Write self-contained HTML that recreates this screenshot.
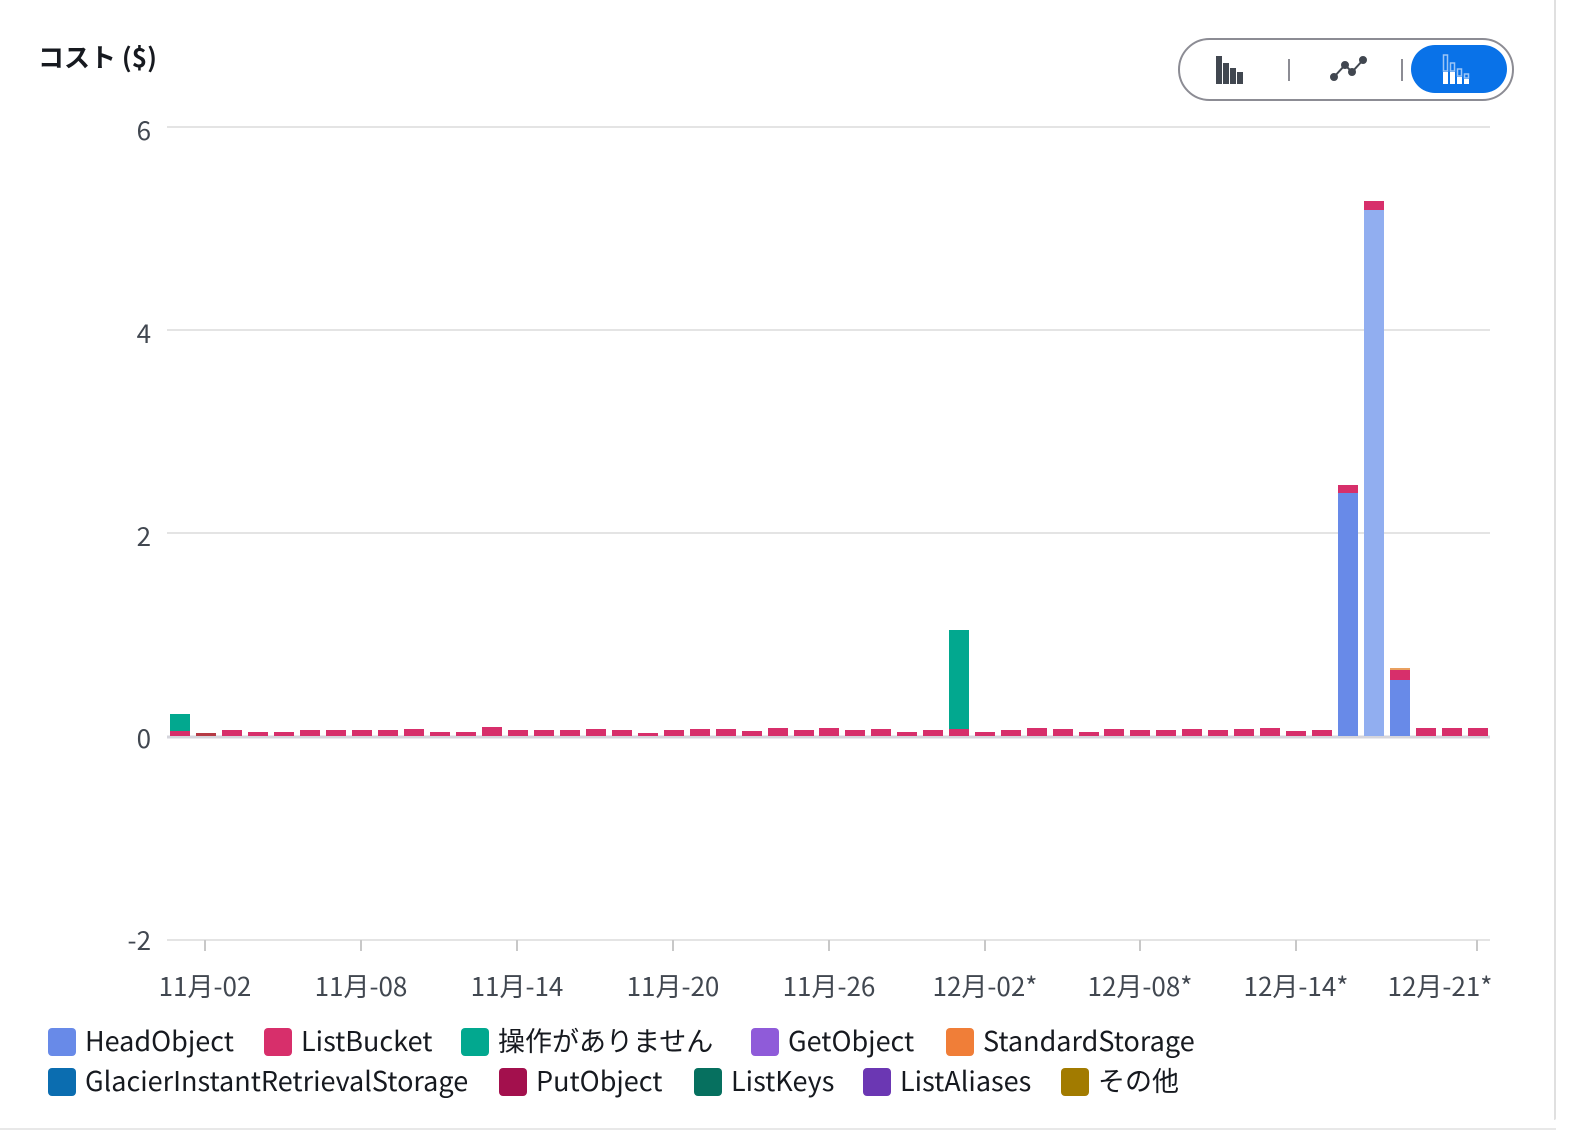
<!DOCTYPE html>
<html><head><meta charset="utf-8"><style>
body{margin:0;width:1580px;height:1140px;background:#fff;overflow:hidden;position:relative;font-family:"Noto Sans CJK JP","Liberation Sans",sans-serif;color:#16191f}
.t{position:absolute;left:38px;top:38px;font-size:26px;font-weight:bold;}
.lg{position:absolute;font-size:27px;line-height:32px;white-space:nowrap}
.lg i{display:inline-block;width:28px;height:28px;border-radius:4px;vertical-align:-5px;margin-right:9px}
svg text{font-family:"Noto Sans CJK JP","Liberation Sans",sans-serif;}
</style></head><body>
<div class="t">コスト ($)</div>
<div style="position:absolute;left:1554px;top:0;width:2px;height:1120px;background:#e0e0e0;border-radius:0 0 14px 0"></div>
<div style="position:absolute;left:0;top:1128px;width:1556px;height:2px;background:#e8e8e8"></div>
<div style="position:absolute;left:1178px;top:38px;width:332px;height:59px;border:2px solid #8c8c94;border-radius:32px"></div>
<div style="position:absolute;left:1411px;top:45px;width:96px;height:48px;background:#0972e8;border-radius:24px"></div>
<svg width="1580" height="1140" style="position:absolute;left:0;top:0">
<g fill="#414750"><rect x="1216" y="56" width="6" height="28"/><rect x="1223" y="63" width="6" height="21"/><rect x="1230" y="68" width="6" height="16"/><rect x="1237" y="72" width="6" height="12"/></g>
<rect x="1288" y="59" width="2" height="22" fill="#8c8c94"/><rect x="1401" y="59" width="2" height="22" fill="#8c8c94"/>
<g stroke="#414750" stroke-width="2" fill="#414750"><polyline points="1334,77 1345,65 1352,72 1363,60" fill="none"/><circle cx="1334" cy="77" r="3"/><circle cx="1345" cy="65" r="3"/><circle cx="1352" cy="72" r="3"/><circle cx="1363" cy="60" r="3"/></g>
<g fill="#fff"><rect x="1443" y="72" width="5" height="12"/><rect x="1450" y="72" width="5" height="12"/><rect x="1457" y="77" width="5" height="7"/><rect x="1464" y="79" width="5" height="5"/></g>
<g fill="none" stroke="#9cc5f5" stroke-width="1.5"><rect x="1443.5" y="55" width="4" height="16"/><rect x="1450.5" y="63" width="4" height="8"/><rect x="1457.5" y="69" width="4" height="7"/><rect x="1464.5" y="74" width="4" height="4"/></g>
<g stroke="#dcdcdc" stroke-width="1.5"><line x1="167" y1="127" x2="1490" y2="127"/><line x1="167" y1="330" x2="1490" y2="330"/><line x1="167" y1="533" x2="1490" y2="533"/><line x1="167" y1="940" x2="1490" y2="940"/></g>
<line x1="167" y1="737" x2="1490" y2="737" stroke="#d5d5dc" stroke-width="3"/>
<g fill="#414750" font-size="26" text-anchor="end"><text x="151" y="140">6</text><text x="151" y="343">4</text><text x="151" y="546">2</text><text x="151" y="748">0</text><text x="151" y="950">-2</text></g>
<g stroke="#c8c8c8" stroke-width="2"><line x1="205" y1="940" x2="205" y2="951"/><line x1="361" y1="940" x2="361" y2="951"/><line x1="517" y1="940" x2="517" y2="951"/><line x1="673" y1="940" x2="673" y2="951"/><line x1="829" y1="940" x2="829" y2="951"/><line x1="985" y1="940" x2="985" y2="951"/><line x1="1140" y1="940" x2="1140" y2="951"/><line x1="1296" y1="940" x2="1296" y2="951"/><line x1="1477" y1="940" x2="1477" y2="951"/></g>
<g fill="#414750" font-size="26" text-anchor="middle"><text x="205" y="996">11月-02</text><text x="361" y="996">11月-08</text><text x="517" y="996">11月-14</text><text x="673" y="996">11月-20</text><text x="829" y="996">11月-26</text><text x="985" y="996">12月-02*</text><text x="1140" y="996">12月-08*</text><text x="1296" y="996">12月-14*</text><text x="1440" y="996">12月-21*</text></g>
<g fill="#d72f6b">
<rect x="170" y="731" width="20" height="5"/><rect x="196" y="733" width="20" height="3" fill="#b53a45"/><rect x="222" y="730" width="20" height="6"/><rect x="248" y="732" width="20" height="4"/><rect x="274" y="732" width="20" height="4"/><rect x="300" y="730" width="20" height="6"/><rect x="326" y="730" width="20" height="6"/><rect x="352" y="730" width="20" height="6"/><rect x="378" y="730" width="20" height="6"/><rect x="404" y="729" width="20" height="7"/><rect x="430" y="732" width="20" height="4"/><rect x="456" y="732" width="20" height="4"/><rect x="482" y="727" width="20" height="9"/><rect x="508" y="730" width="20" height="6"/><rect x="534" y="730" width="20" height="6"/><rect x="560" y="730" width="20" height="6"/><rect x="586" y="729" width="20" height="7"/><rect x="612" y="730" width="20" height="6"/><rect x="638" y="733" width="20" height="3"/><rect x="664" y="730" width="20" height="6"/><rect x="690" y="729" width="20" height="7"/><rect x="716" y="729" width="20" height="7"/><rect x="742" y="731" width="20" height="5"/><rect x="768" y="728" width="20" height="8"/><rect x="794" y="730" width="20" height="6"/><rect x="819" y="728" width="20" height="8"/><rect x="845" y="730" width="20" height="6"/><rect x="871" y="729" width="20" height="7"/><rect x="897" y="732" width="20" height="4"/><rect x="923" y="730" width="20" height="6"/><rect x="949" y="729" width="20" height="7"/><rect x="975" y="732" width="20" height="4"/><rect x="1001" y="730" width="20" height="6"/><rect x="1027" y="728" width="20" height="8"/><rect x="1053" y="729" width="20" height="7"/><rect x="1079" y="732" width="20" height="4"/><rect x="1104" y="729" width="20" height="7"/><rect x="1130" y="730" width="20" height="6"/><rect x="1156" y="730" width="20" height="6"/><rect x="1182" y="729" width="20" height="7"/><rect x="1208" y="730" width="20" height="6"/><rect x="1234" y="729" width="20" height="7"/><rect x="1260" y="728" width="20" height="8"/><rect x="1286" y="731" width="20" height="5"/><rect x="1312" y="730" width="20" height="6"/>
<rect x="1338" y="485" width="20" height="8"/><rect x="1364" y="201" width="20" height="9"/><rect x="1390" y="670" width="20" height="10"/>
<rect x="1416" y="728" width="20" height="8"/><rect x="1442" y="728" width="20" height="8"/><rect x="1468" y="728" width="20" height="8"/>
</g>
<rect x="170" y="714" width="20" height="17" fill="#02a88f"/><rect x="949" y="630" width="20" height="99" fill="#02a88f"/>
<rect x="1338" y="493" width="20" height="243" fill="#688ae8"/><rect x="1364" y="210" width="20" height="526" fill="#91aef0"/><rect x="1390" y="680" width="20" height="56" fill="#688ae8"/><rect x="1390" y="668" width="20" height="2" fill="#e9a060"/>
</svg>
<div class="lg" style="left:48px;top:1024px"><i style="background:#688ae8"></i>HeadObject</div>
<div class="lg" style="left:264px;top:1024px"><i style="background:#d72f6b"></i>ListBucket</div>
<div class="lg" style="left:461px;top:1024px"><i style="background:#02a88f"></i>操作がありません</div>
<div class="lg" style="left:751px;top:1024px"><i style="background:#8f5bd9"></i>GetObject</div>
<div class="lg" style="left:946px;top:1024px"><i style="background:#f07e38"></i>StandardStorage</div>
<div class="lg" style="left:48px;top:1064px"><i style="background:#0b6db0"></i>GlacierInstantRetrievalStorage</div>
<div class="lg" style="left:499px;top:1064px"><i style="background:#a3104d"></i>PutObject</div>
<div class="lg" style="left:694px;top:1064px"><i style="background:#06705f"></i>ListKeys</div>
<div class="lg" style="left:863px;top:1064px"><i style="background:#6b37b3"></i>ListAliases</div>
<div class="lg" style="left:1061px;top:1064px"><i style="background:#a27b00"></i>その他</div>
</body></html>
